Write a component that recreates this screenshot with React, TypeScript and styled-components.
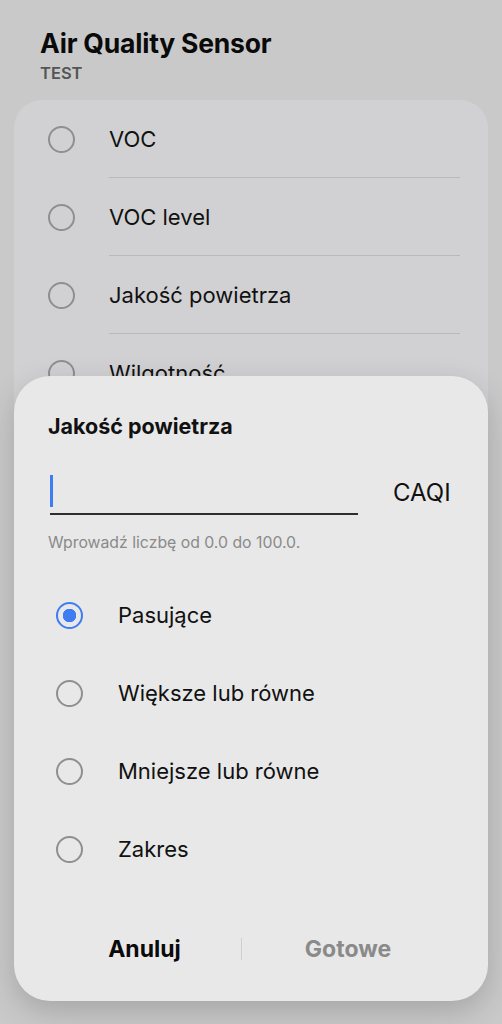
import styled, { createGlobalStyle } from 'styled-components'

const GlobalStyle = createGlobalStyle`
  html, body {
    margin: 0;
    padding: 0;
    background: #c9c9c9;
    font-family: Inter, 'Noto Sans', Roboto, sans-serif;
  }
`

const sensors = ['VOC', 'VOC level', 'Jakość powietrza', 'Wilgotność', 'Temperatura']
const options = ['Pasujące', 'Większe lub równe', 'Mniejsze lub równe', 'Zakres']

const App = () => {
  return (
    <Page>
      <GlobalStyle />
      <Header>
        <Title>Air Quality Sensor</Title>
        <Subtitle>TEST</Subtitle>
      </Header>
      <ListCard>
        {sensors.map((name, i) => (
          <SensorRow key={name}>
            <Radio />
            <SensorLabel last={i === sensors.length - 1}>{name}</SensorLabel>
          </SensorRow>
        ))}
      </ListCard>

      <Dialog>
        <DialogTitle>Jakość powietrza</DialogTitle>
        <InputRow>
          <Field>
            <Cursor />
          </Field>
          <Unit>CAQI</Unit>
        </InputRow>
        <Helper>Wprowadź liczbę od 0.0 do 100.0.</Helper>
        <Options>
          {options.map((opt, i) => (
            <OptionRow key={opt}>
              <Radio checked={i === 0} />
              <OptionLabel>{opt}</OptionLabel>
            </OptionRow>
          ))}
        </Options>
        <Footer>
          <Action>Anuluj</Action>
          <Divider />
          <Action muted>Gotowe</Action>
        </Footer>
      </Dialog>
    </Page>
  )
}

const Page = styled.div`
  position: relative;
  width: 502px;
  height: 1024px;
  overflow: hidden;
  background: #c9c9c9;
`

const Header = styled.div`
  padding: 27px 40px 0;
`

const Title = styled.h1`
  margin: 0;
  font-size: 26.5px;
  line-height: 32px;
  font-weight: 700;
  color: #0a0a0a;
  letter-spacing: -0.2px;
`

const Subtitle = styled.div`
  margin-top: 4px;
  font-size: 16.5px;
  line-height: 20px;
  font-weight: 600;
  color: #555;
`

const ListCard = styled.div`
  margin: 17px 14px 0;
  background: #d1d1d3;
  border-radius: 28px;
  height: 600px;
`

const SensorRow = styled.div`
  display: flex;
  align-items: stretch;
  height: 78px;
  padding-left: 34px;
  padding-right: 28px;
`

const Radio = styled.span<{ checked?: boolean }>`
  flex: none;
  align-self: center;
  box-sizing: border-box;
  width: 27px;
  height: 27px;
  border-radius: 50%;
  border: 2px solid ${p => (p.checked ? '#3d7cf2' : '#8f8f8f')};
  background: ${p =>
    p.checked ? 'radial-gradient(circle, #3d7cf2 0 6.5px, transparent 7px)' : 'transparent'};
`

const SensorLabel = styled.div<{ last?: boolean }>`
  flex: 1;
  display: flex;
  align-items: center;
  margin-left: 34px;
  font-size: 22px;
  color: #111;
  border-bottom: ${p => (p.last ? 'none' : '1.5px solid #b9b9bb')};
`

const Dialog = styled.div`
  position: absolute;
  left: 14px;
  right: 14px;
  top: 376px;
  height: 625px;
  box-sizing: border-box;
  background: #e8e8e8;
  border-radius: 36px;
  box-shadow: 0 10px 30px rgba(0, 0, 0, 0.18);
  padding: 38px 34px 0;
  display: flex;
  flex-direction: column;
`

const DialogTitle = styled.h2`
  margin: 0;
  font-size: 21.5px;
  line-height: 24px;
  font-weight: 700;
  color: #111;
`

const InputRow = styled.div`
  display: flex;
  align-items: center;
  margin-top: 31px;
`

const Field = styled.div`
  width: 308px;
  height: 44px;
  display: flex;
  align-items: center;
  border-bottom: 2px solid #2e2e2e;
  margin-left: 2px;
`

const Cursor = styled.span`
  width: 3px;
  height: 32px;
  background: #3d7cf2;
`

const Unit = styled.div`
  margin-left: 35px;
  font-size: 24px;
  color: #111;
`

const Helper = styled.div`
  margin-top: 18px;
  font-size: 15.8px;
  color: #8a8a8a;
`

const Options = styled.div`
  margin-top: 24px;
  display: flex;
  flex-direction: column;
`

const OptionRow = styled.div`
  display: flex;
  align-items: center;
  height: 78px;
  padding-left: 8px;
`

const OptionLabel = styled.div`
  margin-left: 35px;
  font-size: 22px;
  color: #111;
`

const Footer = styled.div`
  margin-top: auto;
  margin-bottom: 36px;
  display: grid;
  grid-template-columns: 193px 1px 1fr;
  align-items: center;
  height: 32px;
`

const Action = styled.div<{ muted?: boolean }>`
  text-align: center;
  font-size: 23px;
  font-weight: 700;
  color: ${p => (p.muted ? '#8a8a8a' : '#0a0a0a')};
`

const Divider = styled.span`
  width: 1px;
  height: 22px;
  background: #cfcfcf;
`

export default App
